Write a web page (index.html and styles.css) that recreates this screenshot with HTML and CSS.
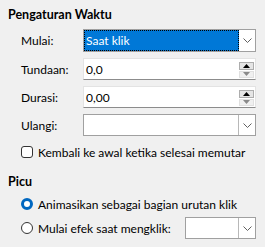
FILE: index.html
```html
<!DOCTYPE html>
<html lang="id">
<head>
<meta charset="UTF-8" />
<title>Pengaturan Waktu</title>
<link rel="stylesheet" href="styles.css">
</head>
<body>

<div class="group-title">Pengaturan Waktu</div>

<div class="form">
  <div class="row">
    <span class="label">Mulai:</span>
    <div class="combo">
      <div class="combo-value selected"><span>Saat klik</span></div>
      <div class="combo-btn">
        <svg width="9" height="5" viewBox="0 0 9 5"><path d="M0.5 0.5 L4.5 4.5 L8.5 0.5" fill="none" stroke="#606060" /></svg>
      </div>
    </div>
  </div>

  <div class="row">
    <span class="label">Tundaan:</span>
    <div class="spin">
      <div class="spin-value">0,0</div>
      <div class="spin-btns">
        <div class="spin-up"><svg width="7" height="4" viewBox="0 0 7 4"><path d="M0 4 L3.5 0 L7 4 Z" fill="#000" /></svg></div>
        <div class="spin-down"><svg width="7" height="4" viewBox="0 0 7 4"><path d="M0 0 L3.5 4 L7 0 Z" fill="#8a8a8a" /></svg></div>
      </div>
    </div>
  </div>

  <div class="row">
    <span class="label">Durasi:</span>
    <div class="spin">
      <div class="spin-value">0,00</div>
      <div class="spin-btns">
        <div class="spin-up"><svg width="7" height="4" viewBox="0 0 7 4"><path d="M0 4 L3.5 0 L7 4 Z" fill="#000" /></svg></div>
        <div class="spin-down"><svg width="7" height="4" viewBox="0 0 7 4"><path d="M0 0 L3.5 4 L7 0 Z" fill="#8a8a8a" /></svg></div>
      </div>
    </div>
  </div>

  <div class="row">
    <span class="label">Ulangi:</span>
    <div class="combo">
      <div class="combo-value"></div>
      <div class="combo-btn sep">
        <svg width="9" height="5" viewBox="0 0 9 5"><path d="M0.5 0.5 L4.5 4.5 L8.5 0.5" fill="none" stroke="#606060" /></svg>
      </div>
    </div>
  </div>

  <label class="check-row">
    <span class="checkbox"></span>
    <span>Kembali ke awal ketika selesai memutar</span>
  </label>
</div>

<div class="group-title picu">Picu</div>

<div class="form radios">
  <label class="radio-row">
    <span class="radio checked"></span>
    <span>Animasikan sebagai bagian urutan klik</span>
  </label>
  <div class="radio-row">
    <span class="radio"></span>
    <span class="radio-text">Mulai efek saat mengklik:</span>
    <div class="combo small">
      <div class="combo-value"></div>
      <div class="combo-btn sep">
        <svg width="9" height="5" viewBox="0 0 9 5"><path d="M0.5 0.5 L4.5 4.5 L8.5 0.5" fill="none" stroke="#606060" /></svg>
      </div>
    </div>
  </div>
</div>

</body>
</html>
```

FILE: styles.css
```css
body {
  margin: 0;
  padding: 7px 9px 0 8px;
  background: #f0f0f0;
  font-family: Lato, sans-serif;
  font-size: 12px;
  color: #000;
  white-space: nowrap;
}
.group-title {
  font-weight: bold;
  font-size: 12.5px;
  line-height: 16px;
  height: 16px;
}
.form {
  display: flex;
  flex-direction: column;
  gap: 6px;
  padding-left: 13px;
  margin-top: 6px;
}
.row {
  display: flex;
  align-items: center;
  height: 22px;
}
.row:first-child {
  height: 23px;
}
.label {
  width: 62px;
}
.combo {
  flex: 1;
  display: flex;
  height: 100%;
  box-sizing: border-box;
  border: 1px solid #a0a0a0;
  background: #fff;
}
.combo-value {
  flex: 1;
  display: flex;
  align-items: center;
}
.combo-value.selected {
  background: #0078d7;
  color: #fff;
  outline: 1px dotted #000;
  outline-offset: -1px;
  padding-left: 2px;
}
.combo-btn {
  width: 16px;
  display: flex;
  align-items: center;
  justify-content: center;
}
.combo-btn.sep {
  border-left: 1px solid #b8b8b8;
}
.spin {
  flex: 1;
  display: flex;
  height: 100%;
  box-sizing: border-box;
  background: #fff;
  border: 1px solid #e3e3e3;
  border-bottom-color: #8c8c8c;
}
.spin-value {
  flex: 1;
  display: flex;
  align-items: center;
  padding-left: 2px;
}
.spin-btns {
  width: 15px;
  margin: 3px 1px 1px 0;
  display: flex;
  flex-direction: column;
  gap: 1px;
}
.spin-btns div {
  height: 8px;
  display: flex;
  align-items: center;
  justify-content: center;
  box-sizing: border-box;
}
.spin-up {
  background: #e5e5e5;
  border: 1px solid #adadad;
}
.spin-down {
  background: #f0f0f0;
  border: 1px solid #e0e0e0;
}
.check-row, .radio-row {
  display: flex;
  align-items: center;
  gap: 5px;
}
.check-row {
  height: 16px;
  margin-top: 2px;
}
.checkbox {
  width: 12px;
  height: 12px;
  box-sizing: border-box;
  border: 1px solid #333;
  border-radius: 3px;
  background: #fff;
}
.picu {
  margin-top: 14px;
}
.radios {
  gap: 2px;
  margin-top: 3px;
}
.radio-row {
  height: 22px;
}
.radio {
  width: 12px;
  height: 12px;
  box-sizing: border-box;
  border: 1px solid #333;
  border-radius: 50%;
  background: #fff;
}
.radio.checked {
  border: 3.5px solid #0067c0;
}
.radio-text {
  width: 142px;
}
.combo.small {
  flex: 0 0 71px;
}
```
